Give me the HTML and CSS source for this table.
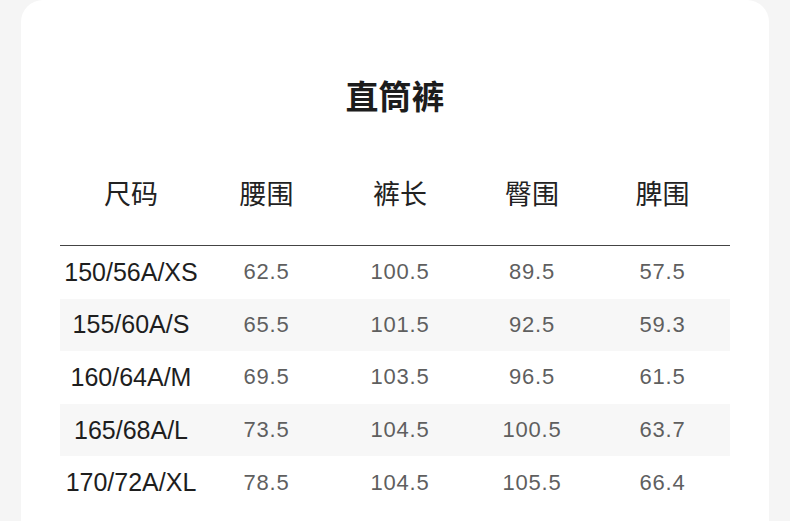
FILE: index.html
```html
<!DOCTYPE html>
<html lang="zh-CN">
<head>
<meta charset="utf-8">
<title>直筒裤</title>
<link rel="stylesheet" href="styles.css">
</head>
<body>
<div class="card">
  <h1 class="title">直筒裤</h1>
  <div class="table">
    <div class="row head">
      <div class="cell">尺码</div>
      <div class="cell">腰围</div>
      <div class="cell">裤长</div>
      <div class="cell">臀围</div>
      <div class="cell">脾围</div>
    </div>
    <div class="row">
      <div class="cell size">150/56A/XS</div>
      <div class="cell num">62.5</div>
      <div class="cell num">100.5</div>
      <div class="cell num">89.5</div>
      <div class="cell num">57.5</div>
    </div>
    <div class="row alt">
      <div class="cell size">155/60A/S</div>
      <div class="cell num">65.5</div>
      <div class="cell num">101.5</div>
      <div class="cell num">92.5</div>
      <div class="cell num">59.3</div>
    </div>
    <div class="row">
      <div class="cell size">160/64A/M</div>
      <div class="cell num">69.5</div>
      <div class="cell num">103.5</div>
      <div class="cell num">96.5</div>
      <div class="cell num">61.5</div>
    </div>
    <div class="row alt">
      <div class="cell size">165/68A/L</div>
      <div class="cell num">73.5</div>
      <div class="cell num">104.5</div>
      <div class="cell num">100.5</div>
      <div class="cell num">63.7</div>
    </div>
    <div class="row">
      <div class="cell size">170/72A/XL</div>
      <div class="cell num">78.5</div>
      <div class="cell num">104.5</div>
      <div class="cell num">105.5</div>
      <div class="cell num">66.4</div>
    </div>
  </div>
</div>
</body>
</html>
```

FILE: styles.css
```css
html, body {
  margin: 0;
  padding: 0;
  background: #f5f5f5;
  overflow: hidden;
}

body {
  width: 790px;
  height: 521px;
  font-family: "Liberation Sans", "Noto Sans CJK SC", sans-serif;
}

.card {
  margin-left: 21px;
  width: 748px;
  height: 521px;
  background: #ffffff;
  border-radius: 22px 22px 0 0;
  padding: 0 39px;
  box-sizing: border-box;
}

.title {
  margin: 0;
  padding-top: 75px;
  height: 40px;
  line-height: 40px;
  text-align: center;
  font-family: "Noto Sans CJK SC", sans-serif;
  font-size: 33px;
  font-weight: 700;
  color: #1c1c1c;
}

.table {
  margin-top: 58px;
}

.row {
  display: grid;
  grid-template-columns: 142px 129px 138px 126px 135px;
  height: 52.6px;
  align-items: center;
}

.row.head {
  height: 72px;
  align-items: start;
  border-bottom: 1px solid #444444;
}

.row.head .cell {
  font-family: "Noto Sans CJK SC", sans-serif;
  font-size: 27px;
  line-height: 40px;
  color: #222222;
}

.row.alt {
  background: #f7f7f7;
}

.cell {
  text-align: center;
  white-space: nowrap;
}

.size {
  font-size: 25px;
  color: #1e1e1e;
}

.num {
  font-size: 22px;
  letter-spacing: 0.8px;
  color: #5f5f5f;
}
```
